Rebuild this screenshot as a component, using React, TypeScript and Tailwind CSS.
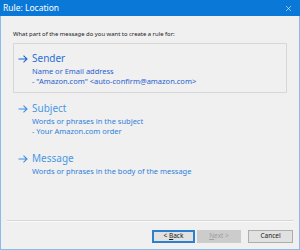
import { X } from "lucide-react";

const OPTIONS = [
  {
    title: "Sender",
    lines: ["Name or Email address", '- "Amazon.com" <auto-confirm@amazon.com>'],
    selected: true,
  },
  {
    title: "Subject",
    lines: ["Words or phrases in the subject", "- Your Amazon.com order"],
    selected: false,
  },
  {
    title: "Message",
    lines: ["Words or phrases in the body of the message"],
    selected: false,
  },
];

function Arrow({ className }: { className?: string }) {
  return (
    <svg viewBox="0 0 10 8" className={className} fill="none" stroke="currentColor" strokeWidth="1.1">
      <path d="M0.5 4h8.5M5.5 0.7L9 4L5.5 7.3" />
    </svg>
  );
}

export default function App() {
  return (
    <div className="flex h-[250px] w-[300px] flex-col bg-[#f0f0f0] font-['Noto_Sans',sans-serif]">
      {/* Title bar */}
      <div className="flex h-[16px] shrink-0 items-center justify-between bg-[#0a78d7] pl-[3px] pr-[7px]">
        <span className="text-[8.5px] leading-none text-white">Rule: Location</span>
        <X className="size-[9px] text-white" strokeWidth={1.5} />
      </div>

      <div className="flex flex-1 flex-col border-x border-b border-[#8bbbea]">
        <p className="ml-[12px] mt-[13px] text-[5.9px] leading-[10px] text-[#1a1a1a]">
          What part of the message do you want to create a rule for:
        </p>

        <div className="ml-[12px] mr-[12px] mt-[4px] flex flex-col">
          {OPTIONS.map((o) => (
            <div
              key={o.title}
              className={`flex h-[50px] flex-col border pl-[18px] pt-[7px] ${
                o.selected ? "border-[#d7d7d7]" : "border-transparent"
              }`}
            >
              <div className="relative flex items-center">
                <Arrow
                  className={`absolute left-[-14px] top-[4px] h-[8px] w-[10px] ${
                    o.selected ? "text-[#2062d0]" : "text-[#3b8ee3]"
                  }`}
                />
                <span
                  className={`text-[10px] leading-[15px] ${
                    o.selected ? "text-[#2a6fd6]" : "text-[#4a97e4]"
                  }`}
                >
                  {o.title}
                </span>
              </div>
              {o.lines.map((l) => (
                <span
                  key={l}
                  className={`text-[7.5px] leading-[10px] ${
                    o.selected ? "text-[#1f5fcf]" : "text-[#2f7fdb]"
                  }`}
                >
                  {l}
                </span>
              ))}
            </div>
          ))}
        </div>

        <div className="mx-[6px] mt-auto border-t border-b border-t-[#d5d5d5] border-b-[#fafafa]" />

        <div className="flex justify-end gap-[2px] pb-[6px] pr-[6px] pt-[8px]">
          <button className="h-[13px] w-[43px] border-2 border-[#2d7fd0] bg-[#e1e1e1] text-[6.5px] leading-none text-[#1a1a1a]">
            &lt; <span className="underline">B</span>ack
          </button>
          <button className="h-[13px] w-[44px] border border-[#cccccc] bg-[#cccccc] text-[6.5px] leading-none text-[#a0a0a0]">
            <span className="underline">N</span>ext &gt;
          </button>
          <button className="ml-[5px] h-[13px] w-[45px] border border-[#adadad] bg-[#e1e1e1] text-[6.5px] leading-none text-[#1a1a1a]">
            Cancel
          </button>
        </div>
      </div>
    </div>
  );
}
